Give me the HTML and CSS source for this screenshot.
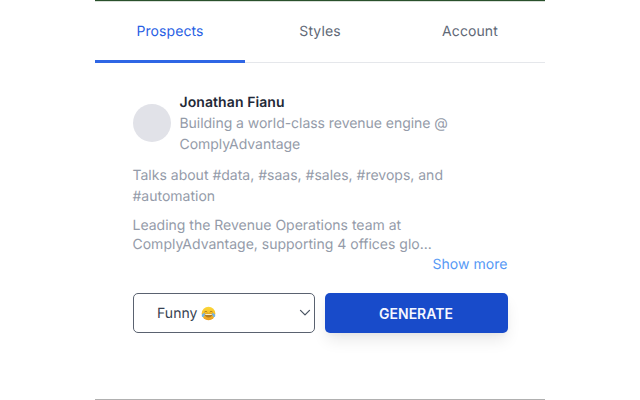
FILE: index.html
```
<!DOCTYPE html>
<html lang="en">
<head>
<meta charset="utf-8">
<title>Prospects</title>
<link rel="stylesheet" href="styles.css">
</head>
<body>
<main class="panel">
  <nav class="tabs">
    <a class="tab tab-active">Prospects</a>
    <a class="tab">Styles</a>
    <a class="tab">Account</a>
  </nav>
  <section class="content">
    <header class="profile">
      <div class="avatar"></div>
      <div class="identity">
        <h1 class="name">Jonathan Fianu</h1>
        <p class="headline">Building a world-class revenue engine @ ComplyAdvantage</p>
      </div>
    </header>
    <p class="topics">Talks about #data, #saas, #sales, #revops, and #automation</p>
    <p class="about">Leading the Revenue Operations team at ComplyAdvantage, supporting 4 offices glo...</p>
    <a class="more">Show more</a>
    <div class="actions">
      <div class="select">
        <span class="value">Funny</span>
        <svg class="emoji" viewBox="0 0 16 16">
          <defs><linearGradient id="face" x1="0" y1="0" x2="0" y2="1"><stop offset="0" stop-color="#fbd83a"/><stop offset=".55" stop-color="#f6bd27"/><stop offset="1" stop-color="#e99a20"/></linearGradient></defs>
          <circle cx="8" cy="8" r="7.3" fill="url(#face)"/>
          <path d="M3.6 6.5 5.3 5.6 6.7 6.6M9.3 6.6 10.7 5.6 12.4 6.5" fill="none" stroke="#9c6b17" stroke-width=".8"/>
          <path d="M3.6 8.3H12.4C12 11 10.4 12.2 8 12.2S4 11 3.6 8.3Z" fill="#b07a20"/>
          <path d="M4.3 8.5H11.7L11.3 9.5H4.7Z" fill="#f8edcf"/>
          <path d="M4.2 7.5C2 7.5.6 9 .8 10.6 1.1 12 3 12 3.6 10.6ZM11.8 7.5C14 7.5 15.4 9 15.2 10.6 14.9 12 13 12 12.4 10.6Z" fill="#6cb3ec"/>
        </svg>
        <svg class="chevron" viewBox="0 0 12 8"><path d="M1.5 1.4 6 5.9 10.5 1.4" fill="none" stroke="#4b5563" stroke-width="1.3" stroke-linecap="round" stroke-linejoin="round"/></svg>
      </div>
      <button class="generate">GENERATE</button>
    </div>
  </section>
</main>
</body>
</html>
```
FILE: styles.css
```
* { box-sizing: border-box; }
body { margin: 0; background: #fff; font: 14px/21px Inter, "Liberation Sans", sans-serif; letter-spacing: -.02px; color: #949ba9; text-rendering: geometricPrecision; }
h1, p { margin: 0; }
.panel { width: 450px; height: 400px; margin-left: 95px; border-top: 1px solid #29502b; border-bottom: 1px solid #b0b0b0; display: flex; flex-direction: column; box-shadow: inset 0 1px #d9dfd9; }
.tabs { display: flex; height: 62px; border-bottom: 1px solid #e5e7eb; }
.tab { flex: 1; height: 62px; padding-top: 20px; text-align: center; font-weight: 400; letter-spacing: .1px; color: #606876; }
.tab-active { color: #2860e4; border-bottom: 3px solid #2f66e5; }
.content { padding: 29px 37.5px 0; display: flex; flex-direction: column; }
.profile { display: flex; align-items: center; gap: 9px; }
.avatar { flex: none; width: 38px; height: 38px; margin: 0 0 1px; border-radius: 50%; background: #e1e2e8; }
.headline { letter-spacing: -.04px; }
.name { font-size: 14px; font-weight: 600; color: #1f2937; letter-spacing: .08px; }
.topics { margin-top: 10px; letter-spacing: 0; }
.about { margin-top: 9px; line-height: 19px; width: 320px; letter-spacing: 0; }
.more { align-self: flex-end; color: #5598f5; font-weight: 400; letter-spacing: .05px; line-height: 21px; }
.actions { display: flex; gap: 9.5px; margin-top: 18px; }
.select { flex: none; width: 182.5px; height: 40px; display: flex; align-items: center; padding: 0 3px 0 23.5px; border: 1.4px solid #5a6270; border-radius: 5px; color: #374151; letter-spacing: .05px; }
.emoji { width: 15px; height: 15px; margin-left: 3px; }
.chevron { width: 12px; height: 8px; margin-left: auto; }
.generate { flex: none; width: 183px; height: 40px; padding: 0; border: 0; border-radius: 5px; background: #184bca; color: #f5f7ff; font: 600 14px/21px Inter, "Liberation Sans", sans-serif; box-shadow: 0 9px 16px -2px rgba(0,0,0,.09), 0 3px 6px -2px rgba(0,0,0,.05); }
```
